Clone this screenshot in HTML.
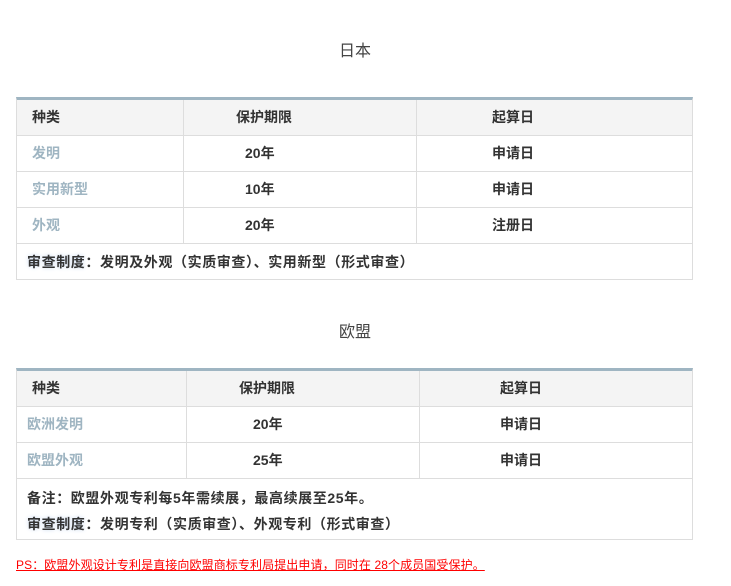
<!DOCTYPE html>
<html><head><meta charset="utf-8"><style>
*{margin:0;padding:0;box-sizing:border-box}
body{width:731px;height:586px;background:#fff;position:relative;font-family:"Liberation Sans","Noto Sans CJK SC",sans-serif;color:#333;overflow:hidden}
.t{position:absolute;left:0;width:710px;text-align:center;font-size:16px;color:#444}
.tb{position:absolute;left:16px;width:677px;border-top:3px solid #9fb5c2;border-left:1px solid #ddd;border-right:1px solid #ddd}
.r{position:relative;height:36px;border-bottom:1px solid #ddd;font-size:14px;font-weight:bold}
.r.h{background:#f4f4f4}
.c{position:absolute;top:0;height:100%;line-height:35px;white-space:nowrap}
.v{position:absolute;top:0;height:100%;width:1px;background:#ddd}
.f{color:#9fb5c2}
.note{font-size:14px;font-weight:bold;padding-left:10px;border-bottom:1px solid #ddd;letter-spacing:0.6px;white-space:nowrap}
.hl{text-shadow:0 0 4px #c9d9ef}
.ps{position:absolute;left:16px;top:556px;font-size:12px;color:#f00;text-decoration:underline;letter-spacing:0.1px}
</style></head><body>
<div class="t" style="top:37px">日本</div>
<div class="tb" style="top:97px">
<div class="r h"><div class="v" style="left:166px"></div><div class="v" style="left:399px"></div><span class="c" style="left:15px">种类</span><span class="c" style="left:219px">保护期限</span><span class="c" style="left:475px">起算日</span></div>
<div class="r"><div class="v" style="left:166px"></div><div class="v" style="left:399px"></div><span class="c f" style="left:15px">发明</span><span class="c" style="left:228px">20年</span><span class="c" style="left:475px">申请日</span></div>
<div class="r"><div class="v" style="left:166px"></div><div class="v" style="left:399px"></div><span class="c f" style="left:15px">实用新型</span><span class="c" style="left:228px">10年</span><span class="c" style="left:475px">申请日</span></div>
<div class="r"><div class="v" style="left:166px"></div><div class="v" style="left:399px"></div><span class="c f" style="left:15px">外观</span><span class="c" style="left:228px">20年</span><span class="c" style="left:475px">注册日</span></div>
<div class="note" style="height:36px;line-height:36px"><span class="hl">审查制度</span>：发明及外观（实质审查）、实用新型（形式审查）</div>
</div>
<div class="t" style="top:318px">欧盟</div>
<div class="tb" style="top:368px">
<div class="r h"><div class="v" style="left:169px"></div><div class="v" style="left:402px"></div><span class="c" style="left:15px">种类</span><span class="c" style="left:222px">保护期限</span><span class="c" style="left:483px">起算日</span></div>
<div class="r"><div class="v" style="left:169px"></div><div class="v" style="left:402px"></div><span class="c f" style="left:10px">欧洲发明</span><span class="c" style="left:236px">20年</span><span class="c" style="left:483px">申请日</span></div>
<div class="r"><div class="v" style="left:169px"></div><div class="v" style="left:402px"></div><span class="c f" style="left:10px">欧盟外观</span><span class="c" style="left:236px">25年</span><span class="c" style="left:483px">申请日</span></div>
<div class="note" style="height:61px;padding-top:6px;line-height:26px"><div>备注：欧盟外观专利每5年需续展，最高续展至25年。</div><div><span class="hl">审查制度</span>：发明专利（实质审查）、外观专利（形式审查）</div></div>
</div>
<div class="ps">PS：欧盟外观设计专利是直接向欧盟商标专利局提出申请，同时在 28个成员国受保护。</div>
</body></html>
